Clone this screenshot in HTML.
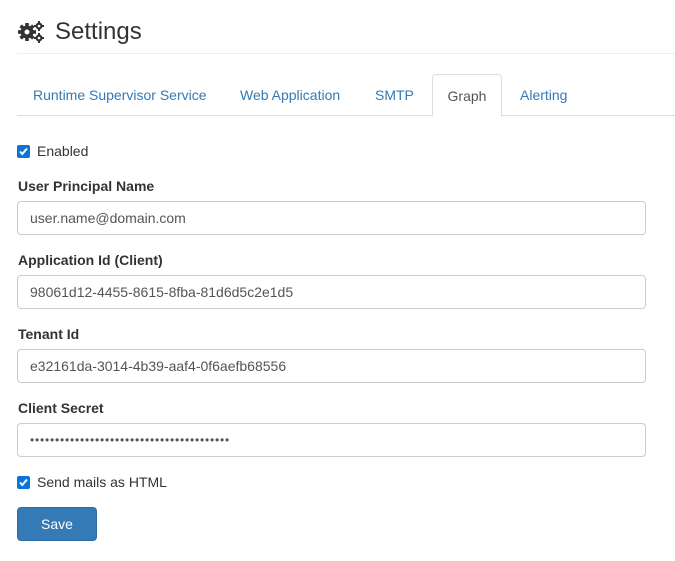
<!DOCTYPE html>
<html><head><style>
body{margin:0;width:675px;height:561px;background:#fff;font-family:"Liberation Sans",sans-serif;font-size:14px;color:#333;position:relative;overflow:hidden}
.a{position:absolute}
h1{position:absolute;left:55px;top:17px;margin:0;font-size:24px;font-weight:normal;line-height:30px;color:#333}
.hr{left:17px;right:0;top:53px;height:1px;background:#eee}
.tabline{left:17px;right:0;top:115px;height:1px;background:#ddd}
.tab{top:85px;color:#337ab7;font-size:14px;line-height:20px}
.active{left:432px;top:74px;width:68px;height:41px;border:1px solid #ddd;border-bottom:1px solid #fff;border-radius:4px 4px 0 0;background:#fff;color:#555;text-align:center;line-height:43px}
.lbl{left:18px;font-weight:bold;line-height:20px}
.inp{left:17px;height:32px;border:1px solid #ccc;border-radius:4px;line-height:32px;padding-left:12px;box-sizing:content-box;color:#555;width:615px}
.cb{left:17px;width:13px;height:13px;background:#0b74d9;border-radius:2px}
.cb svg{position:absolute;left:1px;top:1px}
.btn{left:17px;top:507px;width:78px;height:32px;background:#337ab7;border:1px solid #2e6da4;border-radius:4px;color:#fff;text-align:center;line-height:32px}
</style></head><body>
<svg class="a" style="left:18px;top:20px" width="28" height="24" viewBox="0 0 28 24">
<g fill="#333">
<circle cx="9" cy="12" r="6.5"/>
<g transform="translate(9 12)"><rect x="-1.8" y="-9" width="3.6" height="18"/><rect x="-9" y="-1.8" width="18" height="3.6"/><rect x="-1.8" y="-9" width="3.6" height="18" transform="rotate(45)"/><rect x="-1.8" y="-9" width="3.6" height="18" transform="rotate(-45)"/></g>
<circle cx="21" cy="6" r="3.5"/><g transform="translate(21 6)"><rect x="-1" y="-5" width="2" height="10"/><rect x="-5" y="-1" width="10" height="2"/></g>
<circle cx="21" cy="18" r="3.5"/><g transform="translate(21 18)"><rect x="-1" y="-5" width="2" height="10"/><rect x="-5" y="-1" width="10" height="2"/></g>
</g>
<circle cx="9" cy="12" r="2.5" fill="#fff"/><circle cx="21" cy="6" r="1.3" fill="#fff"/><circle cx="21" cy="18" r="1.3" fill="#fff"/>
</svg>
<h1>Settings</h1>
<div class="a hr"></div>
<div class="a tabline"></div>
<div class="a tab" style="left:33px">Runtime Supervisor Service</div>
<div class="a tab" style="left:240px">Web Application</div>
<div class="a tab" style="left:375px">SMTP</div>
<div class="a active">Graph</div>
<div class="a tab" style="left:520px">Alerting</div>

<div class="a cb" style="top:145px"><svg width="11" height="11" viewBox="0 0 11 11"><path d="M2 5.5l2.3 2.5L9 2.5" stroke="#fff" stroke-width="2" fill="none"/></svg></div>
<div class="a" style="left:37px;top:141px;line-height:20px">Enabled</div>

<div class="a lbl" style="top:176px">User Principal Name</div>
<div class="a inp" style="top:201px">user.name@domain.com</div>
<div class="a lbl" style="top:250px">Application Id (Client)</div>
<div class="a inp" style="top:275px">98061d12-4455-8615-8fba-81d6d5c2e1d5</div>
<div class="a lbl" style="top:324px">Tenant Id</div>
<div class="a inp" style="top:349px">e32161da-3014-4b39-aaf4-0f6aefb68556</div>
<div class="a lbl" style="top:398px">Client Secret</div>
<div class="a inp" style="top:423px;font-size:12px;letter-spacing:0.8px">••••••••••••••••••••••••••••••••••••••••</div>

<div class="a cb" style="top:476px"><svg width="11" height="11" viewBox="0 0 11 11"><path d="M2 5.5l2.3 2.5L9 2.5" stroke="#fff" stroke-width="2" fill="none"/></svg></div>
<div class="a" style="left:37px;top:472px;line-height:20px">Send mails as HTML</div>
<div class="a btn">Save</div>
</body></html>
